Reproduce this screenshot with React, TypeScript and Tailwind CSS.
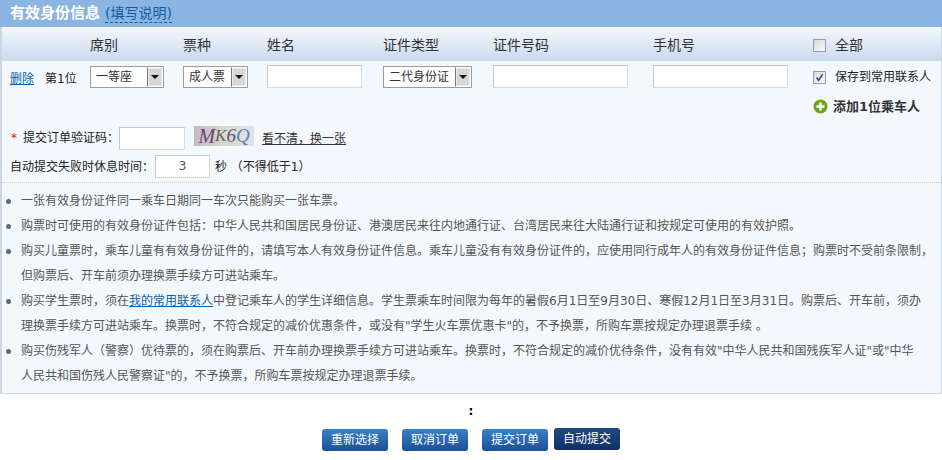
const font = "font-['DejaVu_Sans','Noto_Sans_CJK_SC',sans-serif]"

function FakeSelect({ label, width }: { label: string; width: string }) {
  return (
    <div className={`flex h-[22px] items-center justify-between border border-[#9c9c9c] bg-white ${width}`}>
      <span className="pl-[5px] text-xs leading-none text-[#333]">{label}</span>
      <span className="flex h-[20px] w-[16px] items-center justify-center border border-[#fff] border-l-[#777] bg-[#d6d6d6] shadow-[inset_0_0_0_1px_#e8e8e8]">
        <svg width="8" height="4" viewBox="0 0 8 4">
          <path d="M0 0h8L4 4z" fill="#111" />
        </svg>
      </span>
    </div>
  )
}

function TextBox({ width, center, value }: { width: string; center?: boolean; value?: string }) {
  return (
    <div
      className={`h-[23px] border border-[#dcdcdc] border-t-[#c6c6c6] border-l-[#c6c6c6] bg-white text-xs leading-[21px] text-[#555] ${width} ${center ? "text-center" : ""}`}
    >
      {value}
    </div>
  )
}

function Check({ checked }: { checked?: boolean }) {
  return (
    <span className="flex h-[13px] w-[13px] items-center justify-center border border-[#9a9aa8] bg-gradient-to-br from-[#d8d8d8] to-[#fafafa]">
      {checked && (
        <svg width="9" height="9" viewBox="0 0 9 9">
          <path d="M1.5 4.5 3.6 7.3 7.6 1.2" fill="none" stroke="#4a4a8c" strokeWidth="1.6" />
        </svg>
      )}
    </span>
  )
}

function Action({ label, active }: { label: string; active?: boolean }) {
  return (
    <button
      className={`h-[22px] w-[66px] rounded-[3px] text-center text-xs leading-[21px] text-white ${
        active ? "-mt-[1px] ml-[-8px] bg-gradient-to-b from-[#21497f] to-[#0f3068]" : "bg-gradient-to-b from-[#3b81c4] to-[#1c4f98]"
      }`}
    >
      {label}
    </button>
  )
}

const headings = [
  { label: "席别", cls: "w-[93px]" },
  { label: "票种", cls: "w-[84px]" },
  { label: "姓名", cls: "w-[116px]" },
  { label: "证件类型", cls: "w-[110px]" },
  { label: "证件号码", cls: "w-[160px]" },
  { label: "手机号", cls: "w-[160px]" },
]

export default function App() {
  return (
    <div className={`h-[460px] w-[942px] overflow-hidden bg-white ${font}`}>
      <div className="flex h-[27px] items-center bg-[#8cb4e0] pl-[10px]">
        <span className="text-[15px] font-bold text-white">有效身份信息</span>
        <a className="ml-[5px] border-b border-dashed border-[#0b5fa8] text-[14px] leading-[17px] text-[#0b5fa8]">(填写说明)</a>
      </div>

      <div className="h-[367px] border-b border-l-2 border-r border-[#c9d6e4] bg-[#f3f8fc]">
        {/* column headings */}
        <div className="flex h-[34px] items-center bg-gradient-to-b from-[#f5f8fc] to-[#c8daee] pl-[88px] pt-[2px] text-[14px] text-[#333]">
          {headings.map((h) => (
            <div key={h.label} className={h.cls}>
              {h.label}
            </div>
          ))}
          <div className="flex items-center gap-[9px]">
            <Check />
            <span>全部</span>
          </div>
        </div>

        {/* passenger row */}
        <div className="flex h-[64px] items-start pl-[8px] pt-[4px]">
          <a className="mt-[6px] w-[35px] text-xs text-[#0b5fa8] underline">删除</a>
          <span className="mt-[6px] w-[45px] text-xs text-[#222]">第1位</span>
          <div className="w-[93px] pt-[1px]">
            <FakeSelect label="一等座" width="w-[74px]" />
          </div>
          <div className="w-[84px] pt-[1px]">
            <FakeSelect label="成人票" width="w-[65px]" />
          </div>
          <div className="w-[116px]">
            <TextBox width="w-[95px]" />
          </div>
          <div className="w-[110px] pt-[1px]">
            <FakeSelect label="二代身份证" width="w-[89px]" />
          </div>
          <div className="w-[160px]">
            <TextBox width="w-[135px]" />
          </div>
          <div className="w-[160px]">
            <TextBox width="w-[135px]" />
          </div>
          <div>
            <div className="flex h-[24px] items-center gap-[9px] text-xs text-[#222]">
              <Check checked />
              <span>保存到常用联系人</span>
            </div>
            <div className="mt-[8px] flex items-center gap-[5px]">
              <svg width="15" height="15" viewBox="0 0 15 15">
                <circle cx="7.5" cy="7.5" r="7" fill="#6aa51f" />
                <path d="M7.5 3.5v8M3.5 7.5h8" stroke="#fff" strokeWidth="2.4" />
              </svg>
              <span className="text-[13px] font-bold text-[#333]">添加1位乘车人</span>
            </div>
          </div>
        </div>

        {/* verification */}
        <div className="flex items-center pl-[9px] text-xs text-[#222]">
          <span className="mr-[6px] text-[#d8232a]">*</span>
          <span>提交订单验证码：</span>
          <div className="mt-[2px]">
            <TextBox width="w-[66px]" />
          </div>
          <div className="mb-[4px] ml-[9px] flex h-[20px] w-[60px] items-center justify-center overflow-hidden bg-gradient-to-r from-[#c9b7c2] via-[#d9d7cf] to-[#dfe3ee] font-['Liberation_Serif',serif] italic leading-none">
            <span className="text-[20px] text-[#5d4a78]">M</span>
            <span className="text-[17px] text-[#5f6a58]">K</span>
            <span className="text-[19px] text-[#54507e]">6</span>
            <span className="text-[19px] text-[#5a86a8]">Q</span>
          </div>
          <a className="ml-[8px] mt-[2px] text-xs text-[#333] underline">看不清，换一张</a>
        </div>
        <div className="mt-[5px] flex items-center pl-[8px] text-xs text-[#222]">
          <span className="mr-[1px]">自动提交失败时休息时间：</span>
          <TextBox width="w-[55px]" center value="3" />
          <span className="ml-[5px]">秒 （不得低于1）</span>
        </div>

        {/* notes */}
        <ul className="mt-[4px] whitespace-nowrap border-t border-dotted border-[#c4ccd4] pl-[19px] pt-[6px] text-xs leading-[25px] text-[#555]">
          {[
            <>一张有效身份证件同一乘车日期同一车次只能购买一张车票。</>,
            <>购票时可使用的有效身份证件包括：中华人民共和国居民身份证、港澳居民来往内地通行证、台湾居民来往大陆通行证和按规定可使用的有效护照。</>,
            <>
              购买儿童票时，乘车儿童有有效身份证件的，请填写本人有效身份证件信息。乘车儿童没有有效身份证件的，应使用同行成年人的有效身份证件信息；购票时不受前条限制，
              <br />
              但购票后、开车前须办理换票手续方可进站乘车。
            </>,
            <>
              购买学生票时，须在<a className="text-[#0b5fa8] underline">我的常用联系人</a>中登记乘车人的学生详细信息。学生票乘车时间限为每年的暑假6月1日至9月30日、寒假12月1日至3月31日。购票后、开车前，须办
              <br />
              理换票手续方可进站乘车。换票时，不符合规定的减价优惠条件，或没有"学生火车票优惠卡"的，不予换票，所购车票按规定办理退票手续 。
            </>,
            <>
              购买伤残军人（警察）优待票的，须在购票后、开车前办理换票手续方可进站乘车。换票时，不符合规定的减价优待条件，没有有效"中华人民共和国残疾军人证"或"中华
              <br />
              人民共和国伤残人民警察证"的，不予换票，所购车票按规定办理退票手续。
            </>,
          ].map((note, i) => (
            <li key={i} className="relative">
              <span className="absolute left-[-15px] top-[10px] h-[5px] w-[5px] rounded-full bg-[#5b6b78]" />
              {note}
            </li>
          ))}
        </ul>
      </div>

      <div className="h-[17px] pt-[10px] text-center text-xs font-bold leading-[14px] text-black">:</div>

      <div className="mt-[18px] flex items-start justify-center gap-[14px]">
        <Action label="重新选择" />
        <Action label="取消订单" />
        <Action label="提交订单" />
        <Action label="自动提交" active />
      </div>
    </div>
  )
}
